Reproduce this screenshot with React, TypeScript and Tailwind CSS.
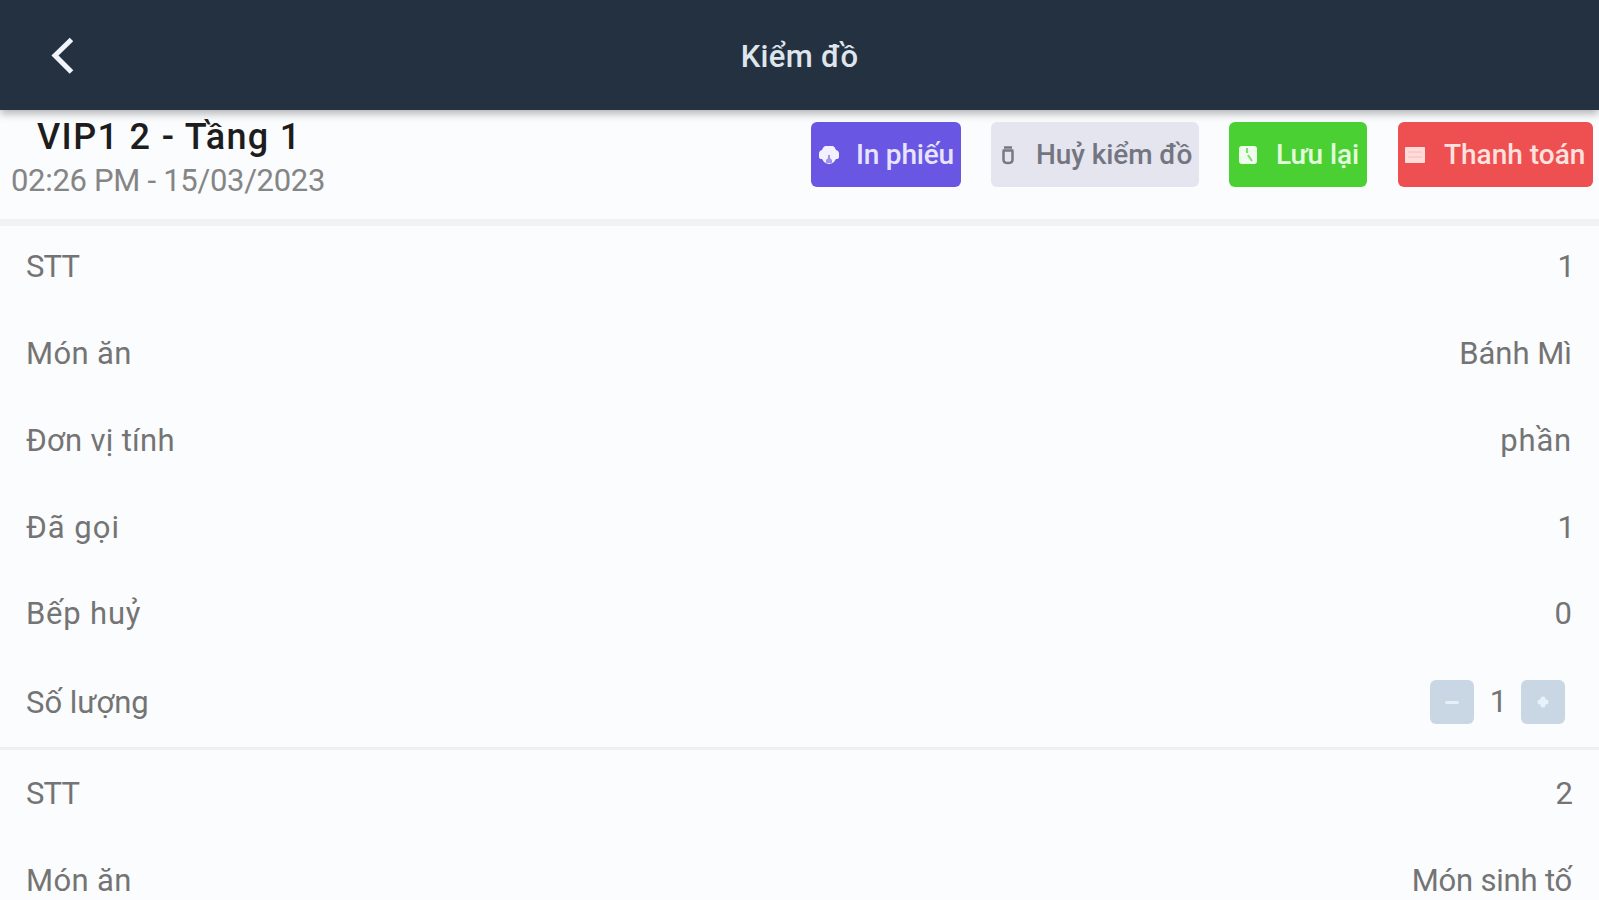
import type { ReactNode } from 'react';

function Button({ className, icon, children }: { className: string; icon: ReactNode; children: ReactNode }) {
  return (
    <button className={`flex h-[65px] shrink-0 items-center rounded-md text-[28px] font-medium whitespace-nowrap ${className}`}>
      {icon}
      {children}
    </button>
  );
}

function Row({ label, value, labelClass = '', valueClass = '' }: { label: string; value: string; labelClass?: string; valueClass?: string }) {
  return (
    <div className="flex h-[86.8px] items-center justify-between pr-[27px] pl-[26px]">
      <span className={labelClass}>{label}</span>
      <span className={valueClass}>{value}</span>
    </div>
  );
}

function Stepper({ value }: { value: number }) {
  return (
    <div className="flex items-center">
      <button className="flex size-11 items-center justify-center rounded-md bg-[#c9d6e4]">
        <span className="h-[3px] w-[14px] rounded bg-[#e6f0f8]" />
      </button>
      <span className="w-[47px] pl-[2px] text-center">{value}</span>
      <button className="flex size-11 items-center justify-center rounded-md bg-[#c9d6e4]">
        <svg width="14" height="14" viewBox="0 0 14 14" fill="none" stroke="#e6f3fb" strokeWidth="5" strokeLinecap="round">
          <path d="M7 4v6M4 7h6" />
        </svg>
      </button>
    </div>
  );
}

export default function App() {
  return (
    <div className="h-[900px] w-full overflow-hidden bg-[#fbfcfe] font-[Roboto,sans-serif] text-[31px] text-[#747474]">
      <header className="relative grid h-[110px] grid-cols-[1fr_auto_1fr] items-center bg-[#243140] pt-1 shadow-[0_4px_8px_rgba(0,0,0,0.28)]">
        <button className="mb-[2px] ml-[50px] w-6">
          <svg width="24" height="38" viewBox="0 0 24 38" fill="none" stroke="#f1f5fb" strokeWidth="5">
            <path d="M21.500 2.500L5 18.500l16.500 16.500" />
          </svg>
        </button>
        <h1 className="pt-px text-[31px] font-medium tracking-[0.3px] text-[#dfe5ec]">Kiểm đồ</h1>
      </header>

      <section className="flex h-[116px] justify-between border-b-[7px] border-[#f1f2f4] pr-[6px]">
        <div className="pt-[4px] pl-[11px]">
          <h2 className="pl-[26px] text-[36px] leading-[46px] font-medium tracking-[1.35px] text-[#1d1d1d]">VIP1 2 - Tầng 1</h2>
          <p className="text-[31px] leading-[41px] tracking-[-0.3px] text-[#858585]">02:26 PM - 15/03/2023</p>
        </div>
        <div className="flex pt-[12px]">
          <Button
            className="mr-[30px] w-[150px] bg-[#6957e4] pl-[8px] text-[#e8e4ff]"
            icon={
              <svg className="mr-[17px]" width="20" height="20" viewBox="0 0 20 20" fill="#f3f0ff">
                <path d="M6 1h8q2 1 3 4a4 4 0 0 1 3 4v3q0 2-3 2l-2 3q-5 4-10 0l-2-3q-3 0-3-2V9a4 4 0 0 1 3-4q1-3 3-4z" />
                <path d="M9 10h2v3l2 2v3H7v-3l2-2z" fill="#9f93ef" />
              </svg>
            }
          >
            <span className="tracking-[-0.2px]">In phiếu</span>
          </Button>
          <Button
            className="mr-[30px] w-[208px] bg-[#e5e5ef] pl-[10px] text-[#747581]"
            icon={
              <svg className="mr-[21px]" width="14" height="20" viewBox="0 0 14 20" fill="none" stroke="#777983" strokeWidth="2.5">
                <path d="M3 2.500h8M1.500 5.500h11M2.500 6v9q0 3 4.500 3t4.500-3V6" />
              </svg>
            }
          >
            <span className="tracking-[-0.1px]">Huỷ kiểm đồ</span>
          </Button>
          <Button
            className="mr-[31px] w-[138px] bg-[#4ad033] pl-[10px] text-[#e2fbdc]"
            icon={
              <svg className="mr-[19px]" width="18" height="18" viewBox="0 0 18 18">
                <rect width="18" height="18" rx="3" fill="#effdec" />
                <path d="M8 2v5M9 9l4 6" stroke="#81dc70" strokeWidth="2" />
              </svg>
            }
          >
            <span className="tracking-[-0.1px]">Lưu lại</span>
          </Button>
          <Button
            className="w-[195px] bg-[#ee4f50] pl-[7px] text-[#ffe2df]"
            icon={
              <svg className="mr-[19px]" width="20" height="16" viewBox="0 0 20 16">
                <rect width="20" height="16" rx="1" fill="#ffdbd9" />
                <path d="M3 5h14M3 10h14" stroke="#fac6c4" strokeWidth="1.5" />
              </svg>
            }
          >
            Thanh toán
          </Button>
        </div>
      </section>

      <section className="-mt-[2px] h-[526px] border-b-[3px] border-[#eef0f2]">
        <Row label="STT" value="1" labelClass="tracking-[-0.8px]" valueClass="-mr-[3px]" />
        <Row label="Món ăn" value="Bánh Mì" labelClass="tracking-[0.35px]" />
        <Row label="Đơn vị tính" value="phần" labelClass="tracking-[0.3px]" valueClass="tracking-[0.8px]" />
        <Row label="Đã gọi" value="1" labelClass="tracking-[1px]" valueClass="-mr-[3px]" />
        <Row label="Bếp huỷ" value="0" labelClass="tracking-[0.8px]" />
        <div className="flex h-[89px] items-center justify-between pr-[34px] pl-[26px]">
          <span className="pt-[2px]">Số lượng</span>
          <Stepper value={1} />
        </div>
      </section>

      <section className="pt-px">
        <Row label="STT" value="2" labelClass="tracking-[-0.8px]" valueClass="-mr-px" />
        <Row label="Món ăn" value="Món sinh tố" labelClass="tracking-[0.35px]" valueClass="tracking-[-0.2px]" />
      </section>
    </div>
  );
}
